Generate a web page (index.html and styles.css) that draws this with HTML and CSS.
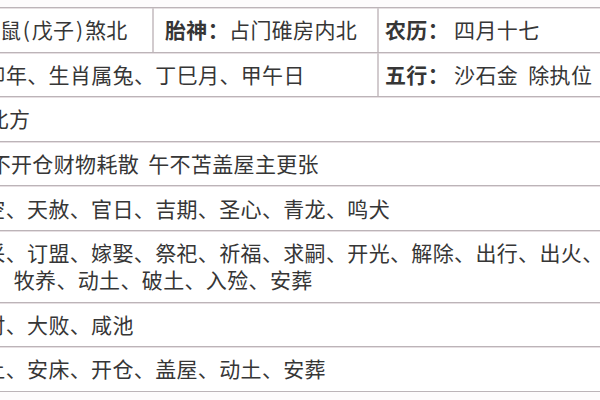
FILE: index.html
```html
<!DOCTYPE html>
<html lang="zh-CN">
<head>
<meta charset="utf-8">
<title>黄历</title>
<link rel="stylesheet" href="styles.css">
</head>
<body>
<div class="sheet">
  <div class="tbl">
    <div class="row">
      <div class="cell lead w1 i1">冲鼠<span class="pr">(</span>戊子<span class="pr">)</span>煞北</div>
      <div class="cell mid"><b>胎神：</b>占门碓房内北</div>
      <div class="cell last"><b>农历：</b> 四月十七</div>
    </div>
    <div class="row">
      <div class="cell lead w2 i2">癸卯年、生肖属兔、丁巳月、甲午日</div>
      <div class="cell last"><b>五行：</b> 沙石金&nbsp; 除执位</div>
    </div>
    <div class="row">
      <div class="cell lead full i3">东北方</div>
    </div>
    <div class="row">
      <div class="cell lead full i4">甲不开仓财物耗散 午不苫盖屋主更张</div>
    </div>
    <div class="row">
      <div class="cell lead full i5">月空、天赦、官日、吉期、圣心、青龙、鸣犬</div>
    </div>
    <div class="row">
      <div class="cell lead full i6">纳采、订盟、嫁娶、祭祀、祈福、求嗣、开光、解除、出行、出火、<br>畜、牧养、动土、破土、入殓、安葬</div>
    </div>
    <div class="row">
      <div class="cell lead full i7">小时、大败、咸池</div>
    </div>
    <div class="row end">
      <div class="cell lead full i8">破土、安床、开仓、盖屋、动土、安葬</div>
    </div>
  </div>
</div>
</body>
</html>
```

FILE: styles.css
```css
* { box-sizing: border-box; }
html, body { margin: 0; padding: 0; background: #fdfbfc; }

.sheet {
  width: 600px;
  height: 400px;
  overflow: hidden;
  padding-top: 7px;
  background: #fdfbfc;
  font-family: "Noto Sans CJK SC", "Noto Sans", sans-serif;
  color: #363636;
}

.tbl {
  width: 640px;
  background: #ffffff;
}

.row {
  display: flex;
  border-top: 1px solid #bcb4b8;
  box-shadow: inset 0 1px 0 #e6dfe2;
}
.row.end { border-bottom: 1px solid #bcb4b8; }

.cell {
  font-size: 21px;
  letter-spacing: 0.35px;
  line-height: 27px;
  padding: 8.3px 0;
  white-space: nowrap;
  overflow: hidden;
}
.cell b { font-weight: 700; }
.pr { padding: 0 1.5px; }

.lead { margin-left: -29px; flex: none; }
.w1 { width: 181px; }
.w2 { width: 406px; }
.full { width: 669px; }

.mid {
  flex: none;
  width: 225px;
  padding-left: 11px;
  border-left: 2px solid #d2cbce;
}
.last {
  flex: 1;
  padding-left: 6px;
  border-left: 2px solid #d2cbce;
}

.i1 { text-indent: 7.6px; }
.i2 { text-indent: -7.8px; }
.i3 { text-indent: -4.8px; }
.i4 { text-indent: -2.7px; word-spacing: 4px; }
.i5 { text-indent: -8px; }
.i6 { text-indent: -8px; }
.i7 { text-indent: -8px; }
.i8 { text-indent: -8px; }
```
